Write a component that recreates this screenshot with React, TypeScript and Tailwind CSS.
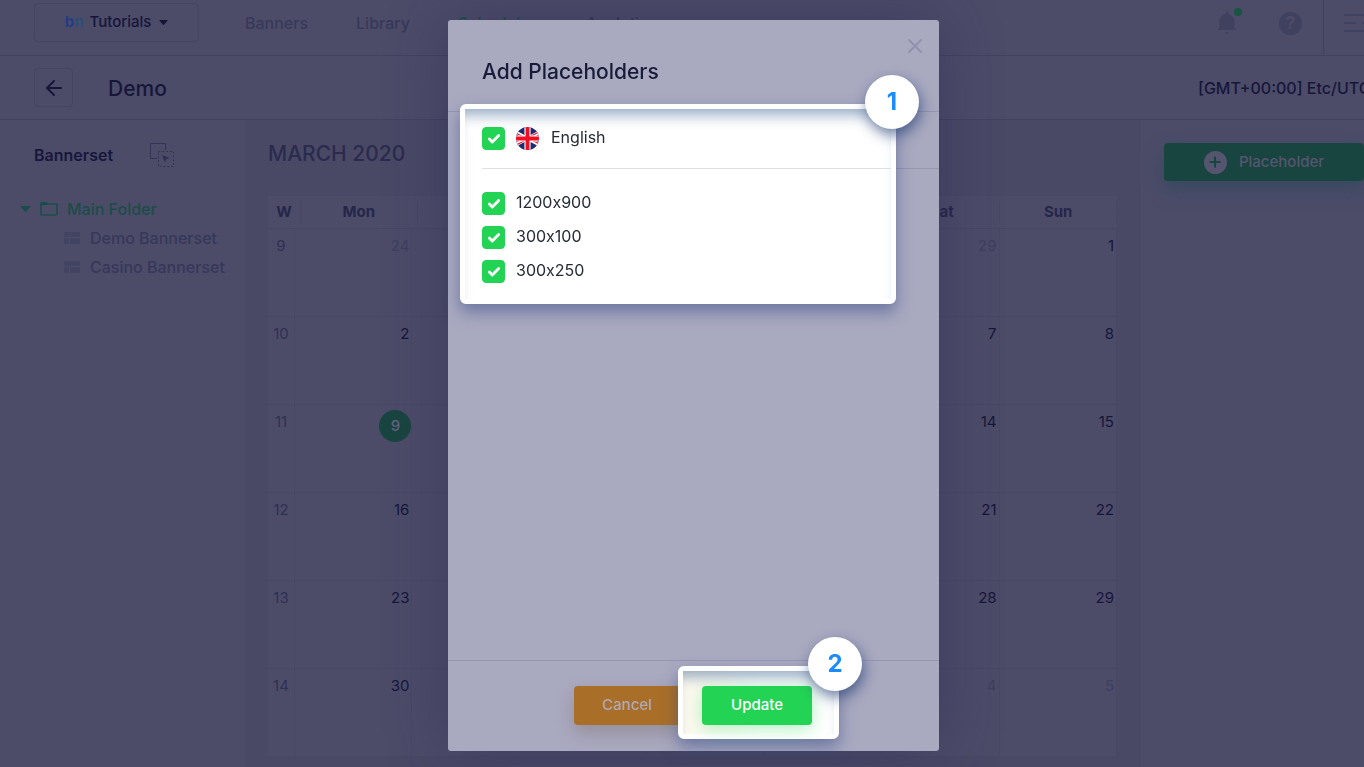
import { useState } from "react";
import { ArrowLeft, Check, Plus, X } from "lucide-react";

const weekDays = ["Mon", "Tue", "Wed", "Thu", "Fri", "Sat", "Sun"];

const weeks = [
  { week: 9, days: [24, 25, 26, 27, 28, 29, 1] },
  { week: 10, days: [2, 3, 4, 5, 6, 7, 8] },
  { week: 11, days: [9, 10, 11, 12, 13, 14, 15] },
  { week: 12, days: [16, 17, 18, 19, 20, 21, 22] },
  { week: 13, days: [23, 24, 25, 26, 27, 28, 29] },
  { week: 14, days: [30, 31, 1, 2, 3, 4, 5] },
];

const sizes = ["1200x900", "300x100", "300x250"];

function isOutside(weekIndex: number, day: number) {
  return (weekIndex === 0 && day > 20) || (weekIndex === 5 && day < 20);
}

function Caret({ className = "" }: { className?: string }) {
  return (
    <svg viewBox="0 0 10 6" className={className} fill="currentColor" aria-hidden="true">
      <path d="M0.6 0h8.8c.5 0 .7.5.4.9L5.5 5.600a.7.7 0 0 1-1 0L.2.9C-.1.5.1 0 .6 0z" />
    </svg>
  );
}

function FlagUK() {
  return (
    <svg viewBox="0 0 24 24" className="size-[23px] shrink-0" aria-hidden="true">
      <clipPath id="flag-round">
        <circle cx="12" cy="12" r="12" />
      </clipPath>
      <g clipPath="url(#flag-round)">
        <rect width="24" height="24" fill="#1f2a6e" />
        <path d="M-2 4.500 26 19.500M26 4.500-2 19.500" stroke="#fff" strokeWidth="3.600" />
        <path d="M-2 5.300 12 12.800M26 18.700 12 11.200M26 4 12 11.500M-2 20 12 12.500" stroke="#f30d23" strokeWidth="1.200" />
        <path d="M12 0v24M0 12h24" stroke="#fff" strokeWidth="6.400" />
        <path d="M12 0v24M0 12h24" stroke="#f30d23" strokeWidth="4" />
      </g>
    </svg>
  );
}

function FolderIcon() {
  return (
    <svg viewBox="0 0 18 14" className="h-[14px] w-[18px]" fill="none" aria-hidden="true">
      <rect x="1" y="2" width="16" height="11" rx="1" stroke="currentColor" strokeWidth="1.600" />
      <path d="M0.300 3.500V1.200C.3.500.8 0 1.500 0H6.500L8.500 2.500z" fill="currentColor" />
    </svg>
  );
}

function BannersetIcon() {
  return (
    <svg viewBox="0 0 16 12" className="h-3 w-4" fill="#434362" aria-hidden="true">
      <path d="M1 0h14a1 1 0 0 1 1 1v4H0V1a1 1 0 0 1 1-1zM0 6h5v6H1a1 1 0 0 1-1-1zM6 6h10v5a1 1 0 0 1-1 1H6z" />
    </svg>
  );
}

function SelectIcon() {
  return (
    <svg viewBox="0 0 24 24" className="size-6" fill="none" stroke="#333354" aria-hidden="true">
      <path d="M7 15.500H.5V.5h15V7" />
      <rect x="8.500" y="8.500" width="15" height="15" strokeDasharray="2 1.800" />
      <path d="M12 12l7.500 3-3.300 1.200L14.800 19.500z" fill="#2f2f50" stroke="none" />
    </svg>
  );
}

function BellIcon() {
  return (
    <svg viewBox="0 0 18 22" className="h-[22px] w-[18px]" fill="#40405f" aria-hidden="true">
      <path d="M9 0c1 0 1.300.7 1.300 1.500v.8C14.500 3 16.500 6 16.500 9.500V15.500l1.500 1.500v1H0v-1l1.500-1.500V9.500C1.500 6 3.500 3 7.700 2.300v-.8C7.700.7 8 0 9 0zM6.500 20h5L9 22z" />
    </svg>
  );
}

function Header() {
  return (
    <header className="flex h-14 items-start overflow-hidden whitespace-nowrap border-b border-[#424260] text-base font-medium text-[#383858]">
      <button className="mt-[3px] ml-[34px] flex h-[39px] w-[165px] shrink-0 items-center justify-center rounded border border-[#444463] text-[15px] text-[#15153a]">
        <span className="font-bold text-[#263c86]">b</span>
        <span className="mr-1.5 font-bold text-[#2a5078]">n</span>
        Tutorials
        <Caret className="ml-2 h-[5px] w-[9px]" />
      </button>
      <nav className="ml-[46px] flex h-[46px] grow items-center gap-12">
        <a href="#banners">Banners</a>
        <a href="#library">Library</a>
        <a href="#schedules" className="text-[#1a5149]">Schedules</a>
        <a href="#analytics">Analytics</a>
      </nav>
      <div className="flex h-[46px] items-center">
        <button aria-label="Notifications" className="relative">
          <BellIcon />
          <span className="absolute -top-1 -right-1.5 size-2 rounded-full bg-[#185540]" />
        </button>
        <button
          aria-label="Help"
          className="ml-[43px] flex size-[23px] items-center justify-center rounded-full bg-[#40405f] text-lg font-bold text-[#4c4c69]"
        >
          ?
        </button>
      </div>
      <div className="ml-[21px] flex h-full w-[41px] shrink-0 items-start border-l border-[#424260] pt-[13px] pl-5">
        <button aria-label="Menu">
          <svg viewBox="0 0 24 20" className="h-5 w-6" stroke="#40405f" strokeWidth="2" aria-hidden="true">
            <path d="M0 2h24M0 10h12M18 10h6M0 18h24" />
          </svg>
        </button>
      </div>
    </header>
  );
}

function SubHeader() {
  return (
    <div className="flex h-16 items-center overflow-hidden border-b border-[#424260] pl-[34px] font-medium text-[#16163a]">
      <button aria-label="Back" className="flex size-[39px] items-center justify-center rounded border border-[#444463]">
        <ArrowLeft className="size-6" strokeWidth={2} />
      </button>
      <h1 className="ml-[35px] grow pt-0.5 text-[21px]">Demo</h1>
      <span className="w-[166px] shrink-0 overflow-hidden whitespace-nowrap text-base">[GMT+00:00] Etc/UTC</span>
    </div>
  );
}

function Sidebar() {
  return (
    <aside className="w-[246px] shrink-0 font-medium">
      <div className="flex h-[70px] items-center pl-[34px]">
        <h2 className="w-[116px] pb-px text-base font-semibold text-[#17173b]">Bannerset</h2>
        <button aria-label="Select bannersets">
          <SelectIcon />
        </button>
      </div>
      <ul className="pt-[5px] text-base leading-7 text-[#37375a]">
        <li className="flex items-center pl-5 text-[#1a4d48]">
          <Caret className="mr-[9px] h-[6px] w-[11px]" />
          <FolderIcon />
          <a href="#main" className="ml-[9px]">Main Folder</a>
        </li>
        {["Demo Bannerset", "Casino Bannerset"].map((name) => (
          <li key={name} className="flex items-center gap-[10px] pt-px pl-16">
            <BannersetIcon />
            <a href="#bannerset">{name}</a>
          </li>
        ))}
      </ul>
    </aside>
  );
}

function Calendar() {
  return (
    <main className="min-w-0 grow bg-[#494966] px-[22px] pr-6">
      <h2 className="flex h-[76px] items-center pb-2 text-[21px] font-medium text-[#2b2b4d]">MARCH 2020</h2>
      <table className="block bg-[#4c4c69] text-[15px]">
        <thead className="block">
          <tr className="grid h-[33px] grid-cols-[33px_repeat(7,minmax(0,1fr))] items-center border-b border-[#474764] text-[#26264a]">
            <th className="h-[22px] border-r border-[#474764] font-bold">W</th>
            {weekDays.map((day) => (
              <th key={day} className="h-[22px] border-r border-[#474764] font-bold">{day}</th>
            ))}
          </tr>
        </thead>
        <tbody className="block">
          {weeks.map(({ week, days }, i) => (
            <tr key={week} className="grid h-[88px] grid-cols-[27px_repeat(7,minmax(0,1fr))] border-b border-[#484865]">
              <td className="border-r border-[#484865] pt-1.5 text-center text-[#303053]">{week}</td>
              {days.map((day) => (
                <td
                  key={day}
                  className={`border-r border-[#484865] text-right ${
                    isOutside(i, day) ? "text-[#3e3e5e]" : "text-[#16163a]"
                  }`}
                >
                  {week === 11 && day === 9 ? (
                    <span className="mt-[5px] ml-auto flex size-8 items-center justify-center rounded-full bg-[#194540] font-medium text-[#62627e]">
                      {day}
                    </span>
                  ) : (
                    <span className="block pt-1.5 pr-0.5">{day}</span>
                  )}
                </td>
              ))}
            </tr>
          ))}
        </tbody>
      </table>
    </main>
  );
}

function CheckRow({ label, flag = false }: { label: string; flag?: boolean }) {
  const [checked, setChecked] = useState(true);

  return (
    <label className="flex h-[23px] items-center text-base text-[#262b36]">
      <span className="relative mr-[11px] flex size-[23px] shrink-0 items-center justify-center">
        <input
          type="checkbox"
          checked={checked}
          onChange={() => setChecked(!checked)}
          className="size-full appearance-none rounded border border-[#22d354] checked:bg-[#22d354]"
        />
        {checked && <Check className="pointer-events-none absolute size-[14px] text-white" strokeWidth={5} />}
      </span>
      {flag && <FlagUK />}
      {/* calt off, otherwise Inter turns the x between digits into a multiply sign */}
      <span className={`pb-[3px] [font-feature-settings:'calt'_0] ${flag ? "ml-3" : ""}`}>{label}</span>
    </label>
  );
}

function StepBadge({ step }: { step: number }) {
  return (
    <span className="absolute -top-[34px] -right-7 z-10 flex size-[54px] items-center justify-center rounded-full bg-white text-2xl font-bold text-[#1a8cff] shadow-[2px_6px_14px_rgba(30,60,115,0.65)]">
      {step}
    </span>
  );
}

function PlaceholderModal() {
  return (
    <div className="fixed inset-0 flex justify-center pt-5 pb-4 pl-[23px]">
      <div
        role="dialog"
        aria-labelledby="modal-title"
        className="relative flex w-[491px] flex-col rounded-[3px] bg-[#a9a9c0] shadow-[0_0_60px_rgba(45,38,82,0.45)]"
      >
        <div className="h-[92px] shrink-0 border-b border-[#9696b0] pt-9 pl-[34px]">
          <h2 id="modal-title" className="text-[21px] leading-8 font-medium text-[#191c38]">Add Placeholders</h2>
          <button aria-label="Close" className="absolute top-[14px] right-3 text-[#9292ae]">
            <X className="size-6" strokeWidth={2} />
          </button>
        </div>

        <div className="relative grow">
          <hr className="absolute top-14 right-0 left-[34px] border-[#9696b0]" />
          <div className="relative -mt-2 mr-[43px] ml-3 h-[200px] rounded-md border-[5px] border-white bg-white shadow-[0_8px_16px_rgba(50,70,130,0.5)]">
            <div className="h-full pl-[17px] shadow-[inset_0_14px_14px_-8px_rgba(50,90,140,0.5)]">
              <div className="border-b border-[#dedfe1] pt-[18px] pb-[18px]">
                <CheckRow label="English" flag />
              </div>
              <div className="flex flex-col gap-[11px] pt-[23px]">
                {sizes.map((size) => (
                  <CheckRow key={size} label={size} />
                ))}
              </div>
            </div>
            <StepBadge step={1} />
          </div>
        </div>

        <div className="flex h-[91px] shrink-0 items-center justify-center gap-[18px] border-t border-[#9696b0] pr-px pb-px text-[15px] font-medium">
          <button className="h-[39px] w-[110px] rounded bg-[#a96f28] pr-1 text-[#aeaabc] shadow-[0_8px_18px_rgba(120,105,95,0.4)]">
            Cancel
          </button>
          <div className="relative">
            <div className="absolute -top-5 -right-[27px] -bottom-[14px] -left-6 rounded-md border-[5px] border-white bg-white shadow-[0_8px_16px_rgba(50,70,130,0.5)]">
              <div className="h-full bg-linear-to-r from-[#fdf9ee] via-white to-white shadow-[inset_0_14px_14px_-8px_rgba(50,90,140,0.5)]" />
            </div>
            <button className="relative block h-[39px] w-[110px] rounded bg-[#22d354] text-white shadow-[0_4px_18px_rgba(34,211,84,0.35)]">
              Update
            </button>
            <div className="absolute -top-[15px] -right-[22px]">
              <StepBadge step={2} />
            </div>
          </div>
        </div>
      </div>
    </div>
  );
}

export default function App() {
  return (
    <div className="flex h-screen flex-col overflow-hidden bg-[#4c4c69] font-['Inter',sans-serif]">
      <Header />
      <SubHeader />
      <div className="flex min-h-0 grow">
        <Sidebar />
        <Calendar />
        <aside className="w-[223px] shrink-0 pt-[23px] pl-[23px]">
          <button className="flex h-[38px] w-full items-center justify-center gap-3 rounded bg-[#194540] text-[15px] font-medium text-[#55556f] shadow-[0_8px_18px_rgba(35,70,85,0.5)]">
            <span className="flex size-[23px] items-center justify-center rounded-full bg-[#55556f] text-[#194540]">
              <Plus className="size-4" strokeWidth={3} />
            </span>
            Placeholder
          </button>
        </aside>
      </div>
      <PlaceholderModal />
    </div>
  );
}
